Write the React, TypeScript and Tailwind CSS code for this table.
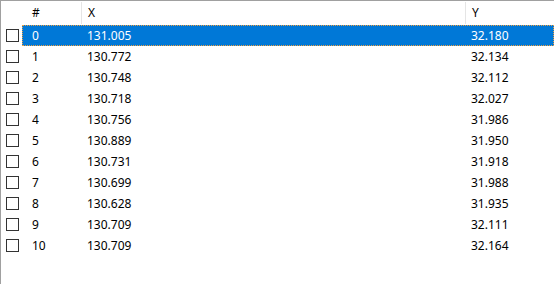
const rows: [string, string, string][] = [
  ['0', '131.005', '32.180'],
  ['1', '130.772', '32.134'],
  ['2', '130.748', '32.112'],
  ['3', '130.718', '32.027'],
  ['4', '130.756', '31.986'],
  ['5', '130.889', '31.950'],
  ['6', '130.731', '31.918'],
  ['7', '130.699', '31.988'],
  ['8', '130.628', '31.935'],
  ['9', '130.709', '32.111'],
  ['10', '130.709', '32.164'],
]

const selected = 0

export default function App() {
  return (
    <div className="w-[554px] h-[284px] overflow-hidden bg-white border-l border-t border-[#a0a0a0] text-[12px] leading-none text-black font-['Segoe_UI','Noto_Sans',sans-serif]">
      {/* Header */}
      <div className="flex h-[24px] items-center">
        <div className="w-[80px] pl-[31px]">#</div>
        <div className="w-px h-[22px] bg-[#e5e5e5]" />
        <div className="w-[383px] pl-[6px]">X</div>
        <div className="w-px h-[22px] bg-[#e5e5e5]" />
        <div className="flex-1 pl-[6px]">Y</div>
      </div>

      {/* Rows */}
      {rows.map(([n, x, y], i) => {
        const sel = i === selected
        return (
          <div key={n} className="flex h-[21px] items-center">
            <div className="w-[21px] h-full flex items-center">
              <div className="ml-[5px] w-[13px] h-[13px] border border-[#333333] bg-white" />
            </div>
            <div
              className={
                sel
                  ? 'flex flex-1 h-full items-center bg-[#0078d7] text-white outline-1 outline-dotted outline-[#f0a040] -outline-offset-1'
                  : 'flex flex-1 h-full items-center'
              }
            >
              <div className="w-[59px] pl-[10px]">{n}</div>
              <div className="w-[384px] pl-[6px]">{x}</div>
              <div className="flex-1 pl-[6px]">{y}</div>
            </div>
          </div>
        )
      })}
    </div>
  )
}
